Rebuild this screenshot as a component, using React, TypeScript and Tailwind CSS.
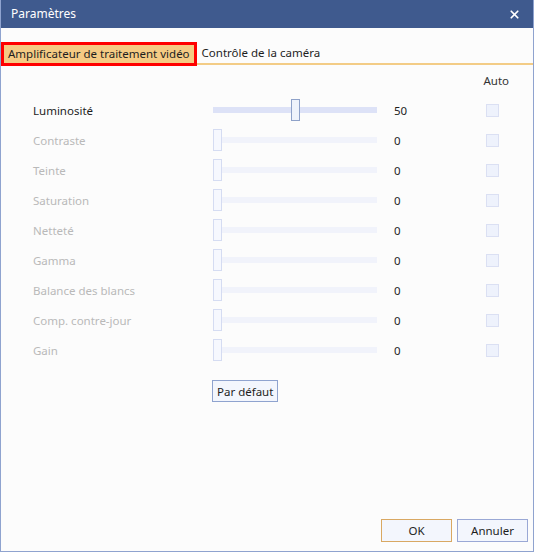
import { X } from "lucide-react";

interface Setting {
  label: string;
  value: number;
  enabled: boolean;
}

const settings: Setting[] = [
  { label: "Luminosité", value: 50, enabled: true },
  { label: "Contraste", value: 0, enabled: false },
  { label: "Teinte", value: 0, enabled: false },
  { label: "Saturation", value: 0, enabled: false },
  { label: "Netteté", value: 0, enabled: false },
  { label: "Gamma", value: 0, enabled: false },
  { label: "Balance des blancs", value: 0, enabled: false },
  { label: "Comp. contre-jour", value: 0, enabled: false },
  { label: "Gain", value: 0, enabled: false },
];

const Slider = ({ value, enabled }: { value: number; enabled: boolean }) => {
  // track is 164px wide, thumb 9px
  const left = (value / 100) * 164 - 4;
  return (
    <div className="relative h-[22px] w-[164px] shrink-0 flex items-center">
      <div
        className={`h-[6px] w-full ${enabled ? "bg-[#dde2f7]" : "bg-[#f1f3fb]"}`}
      />
      <div
        className={`absolute top-0 h-[22px] w-[9px] border ${
          enabled
            ? "border-[#8fa2c9] bg-[#eff3fb]"
            : "border-[#d5dcf2] bg-[#f6f8fe]"
        }`}
        style={{ left: Math.max(left, 0) }}
      />
    </div>
  );
};

const App = () => {
  return (
    <div
      className="w-[534px] h-[552px] flex flex-col bg-[#fcfcfc] border-x border-b border-[#8fa3cf] text-[11.5px]"
      style={{ fontFamily: '"Noto Sans", "Open Sans", sans-serif' }}
    >
      <div className="h-[28px] bg-[#3f5a8e] flex items-center justify-between pl-[10px] pr-[12px] text-white text-[12px]">
        <span>Paramètres</span>
        <X size={13} strokeWidth={3.2} />
      </div>

      <div className="flex-1 flex flex-col">
        <div className="mt-[14px] flex items-end">
          <div className="h-[24px] border-[3px] border-[#ff0000] bg-[#f5cb84] px-[4px] flex items-center text-[#1e1e1e]">
            Amplificateur de traitement vidéo
          </div>
          <div className="flex-1 h-[22px] border-b-2 border-[#f3cc86] pl-[5px] flex items-center text-[#1e1e1e] mb-[1px]">
            Contrôle de la caméra
          </div>
        </div>

        <div className="flex justify-end pr-[24px] mt-[6px] text-[#333]">
          <span>Auto</span>
        </div>

        <div className="flex flex-col mt-[6px]">
          {settings.map((s) => (
            <div key={s.label} className="h-[30px] flex items-center">
              <span
                className={`w-[212px] shrink-0 pl-[32px] ${
                  s.enabled ? "text-[#1e1e1e]" : "text-[#b9b9b9]"
                }`}
              >
                {s.label}
              </span>
              <Slider value={s.value} enabled={s.enabled} />
              <span className="ml-[17px] w-[92px] shrink-0 text-[#1e1e1e]">
                {s.value}
              </span>
              <div className="w-[13px] h-[13px] shrink-0 border border-[#dbe0f3] bg-[#eef2fc]" />
            </div>
          ))}
        </div>

        <div className="pl-[211px] mt-[15px]">
          <button className="h-[22px] px-[4px] border border-[#8fa3cf] bg-[#f3f6fd] text-[#1e1e1e]">
            Par défaut
          </button>
        </div>

        <div className="mt-auto mb-[9px] flex justify-end gap-[5px] pr-[5px]">
          <button className="w-[71px] h-[23px] border border-[#d9a862] bg-[#f3f6fd] text-[#1e1e1e]">
            OK
          </button>
          <button className="w-[71px] h-[23px] border border-[#9aa8d5] bg-[#f3f6fd] text-[#1e1e1e]">
            Annuler
          </button>
        </div>
      </div>
    </div>
  );
};

export default App;
